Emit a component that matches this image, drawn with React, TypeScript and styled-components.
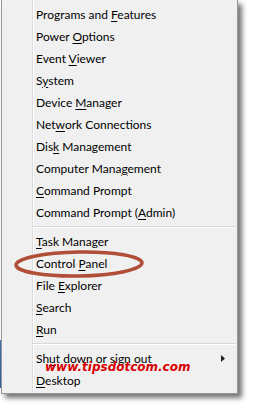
import React from 'react';
import styled, { createGlobalStyle } from 'styled-components';

const Global = createGlobalStyle`
  html, body {
    margin: 0;
    padding: 0;
    background: #ffffff;
  }
`;

const Stage = styled.div`
  width: 253px;
  height: 409px;
  display: flex;
  overflow: hidden;
  background: #ffffff;
`;

const Edge = styled.div`
  width: 1px;
  height: 394px;
  background: linear-gradient(to bottom, #ffffff 0, #ffffff 340px, #3f73b8 340px, #2f5f9f 388px, #ffffff 388px);
`;

const Menu = styled.div`
  position: relative;
  box-sizing: border-box;
  width: 237px;
  height: 394px;
  padding: 3px 0 3px 0;
  border: 1px solid #979797;
  border-top: none;
  background:
    linear-gradient(to right, transparent 30px, #dcdcdc 30px, #dcdcdc 31px, #ffffff 31px, #ffffff 32px, transparent 32px),
    #f0f0f0;
  box-shadow: 4px 4px 5px rgba(0, 0, 0, 0.55);
  font-family: Lato, "Open Sans", sans-serif;
  font-size: 12px;
  color: #000000;
`;

const Item = styled.div`
  height: 22px;
  display: flex;
  align-items: center;
  justify-content: space-between;
  padding: 0 12px 0 34px;
  white-space: nowrap;
`;

const Key = styled.span`
  text-decoration: underline;
  text-underline-offset: 2px;
  text-decoration-thickness: 1px;
`;

const Separator = styled.div`
  height: 7px;
  display: flex;
  flex-direction: column;
  justify-content: flex-start;
  padding-top: 3px;
  box-sizing: border-box;
  margin: 0 1px 0 30px;

  &::before {
    content: '';
    height: 1px;
    background: #d7d7d7;
  }
  &::after {
    content: '';
    height: 1px;
    background: #ffffff;
  }
`;

const Ring = styled.svg`
  position: absolute;
  left: 11px;
  top: 249px;
  pointer-events: none;
`;

const Watermark = styled.div`
  position: absolute;
  left: 43px;
  top: 360px;
  font-family: "DejaVu Sans", Verdana, sans-serif;
  font-weight: bold;
  font-style: italic;
  font-size: 12px;
  color: #d80000;
  white-space: nowrap;
`;

type Entry = { pre: string; key?: string; post?: string; sub?: boolean } | 'sep';

const entries: Entry[] = [
  { pre: 'Programs and ', key: 'F', post: 'eatures' },
  { pre: 'Power ', key: 'O', post: 'ptions' },
  { pre: 'Event ', key: 'V', post: 'iewer' },
  { pre: 'S', key: 'y', post: 'stem' },
  { pre: 'Device ', key: 'M', post: 'anager' },
  { pre: 'Net', key: 'w', post: 'ork Connections' },
  { pre: 'Dis', key: 'k', post: ' Management' },
  { pre: 'Computer Mana', key: 'g', post: 'ement' },
  { pre: '', key: 'C', post: 'ommand Prompt' },
  { pre: 'Command Prompt (', key: 'A', post: 'dmin)' },
  'sep',
  { pre: '', key: 'T', post: 'ask Manager' },
  { pre: 'Control ', key: 'P', post: 'anel' },
  { pre: 'File ', key: 'E', post: 'xplorer' },
  { pre: '', key: 'S', post: 'earch' },
  { pre: '', key: 'R', post: 'un' },
  'sep',
  { pre: 'Sh', key: 'u', post: 't down or sign out', sub: true },
  { pre: '', key: 'D', post: 'esktop' },
];

export default function App() {
  return (
    <Stage>
      <Global />
      <Edge />
      <Menu>
        {entries.map((e, i) =>
          e === 'sep' ? (
            <Separator key={i} />
          ) : (
            <Item key={i}>
              <span>
                {e.pre}
                {e.key && <Key>{e.key}</Key>}
                {e.post}
              </span>
              {e.sub && (
                <svg width="4" height="7" viewBox="0 0 4 7">
                  <path d="M0 0 L4 3.5 L0 7 Z" fill="#222" />
                </svg>
              )}
            </Item>
          )
        )}
        <Ring width="132" height="30" viewBox="0 0 132 30">
          <ellipse cx="66" cy="15" rx="63" ry="12" fill="none" stroke="#b04e38" strokeWidth="3.5" transform="rotate(-1 66 15)" />
        </Ring>
        <Watermark>www.tipsdotcom.com</Watermark>
      </Menu>
    </Stage>
  );
}
